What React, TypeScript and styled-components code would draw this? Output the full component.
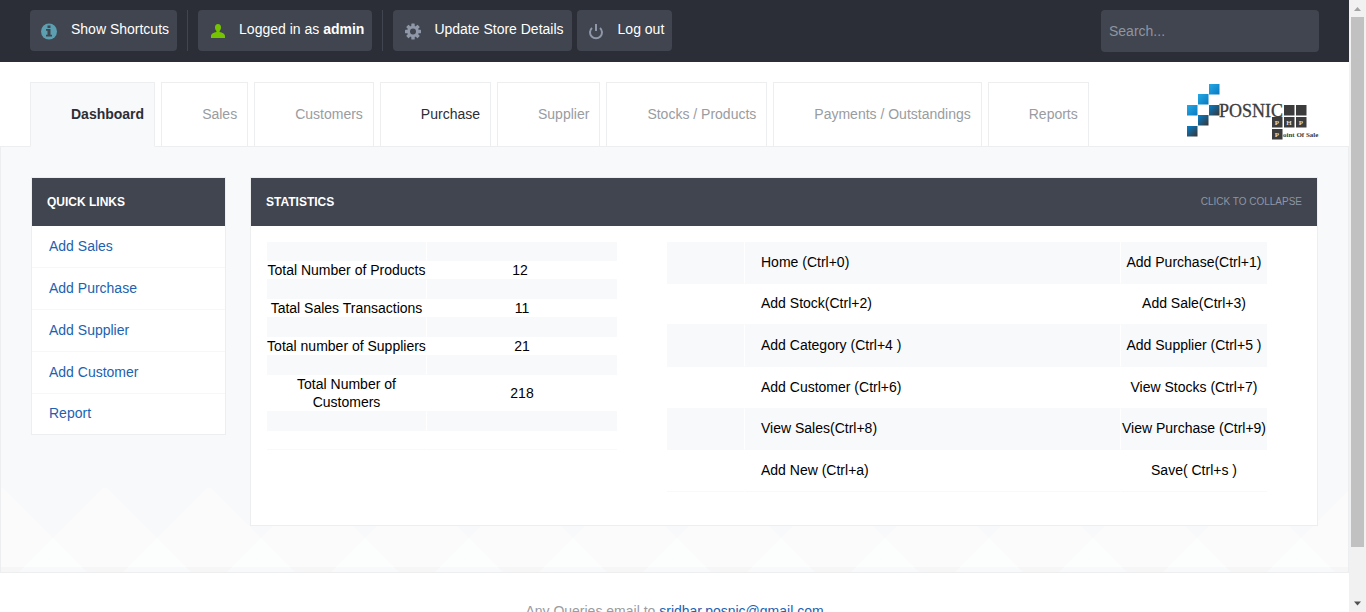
import React from 'react';
import styled, { createGlobalStyle } from 'styled-components';

const c = {
  bar: '#2b2e37',
  panel: '#40454f',
  page: '#f8f9fb',
  line: '#eceef0',
  muted: '#999ca1',
  link: '#1c62b0',
};

const GlobalStyle = createGlobalStyle`
  *, *::before, *::after { box-sizing: border-box; }
  body {
    margin: 0;
    background: #fff;
    color: #000;
    font: 14px/18px "Liberation Sans", Arial, sans-serif;
  }
  a { color: ${c.link}; text-decoration: none; }
  button, input { font: inherit; }
`;

const Shell = styled.div`
  display: flex;
  height: 100vh;
`;

const Page = styled.div`
  flex: 1;
  min-width: 0;
  overflow: hidden auto;
  scrollbar-width: none;
`;

const TopBar = styled.header`
  display: flex;
  align-items: flex-start;
  gap: 5px;
  padding: 10px 30px;
  background: ${c.bar};
`;

const BarLink = styled.a`
  display: flex;
  align-items: center;
  height: 41px;
  padding: 0 8px 0 9px;
  gap: 12px;
  border-radius: 4px;
  background: ${c.panel};
  color: #fff;
  white-space: nowrap;

  svg { display: block; width: 20px; height: 20px; }
`;

const BarLabel = styled.span`
  padding-bottom: 4px;
`;

const Divider = styled.span`
  width: 1px;
  height: 41px;
  margin: 0 5px;
  background: ${c.panel};
`;

const Search = styled.input`
  width: 218px;
  height: 42px;
  margin-left: auto;
  padding: 0 8px;
  border: 0;
  border-radius: 4px;
  background: ${c.panel};
  color: #fff;
  &::placeholder { color: #8f95a1; opacity: 1; }
`;

const NavBar = styled.div`
  display: flex;
  justify-content: space-between;
  align-items: flex-start;
  padding: 20px 30px 0;
`;

const Tabs = styled.nav`
  position: relative;
  z-index: 1;
  display: flex;
  gap: 6px;
  margin-bottom: -1px;
`;

const Tab = styled.a<{ $active?: boolean; $dark?: boolean }>`
  height: 65px;
  padding: 22px 10px 0 40px;
  border: 1px solid ${c.line};
  border-bottom-color: ${p => (p.$active ? c.page : c.line)};
  background: ${p => (p.$active ? c.page : '#fff')};
  color: ${p => (p.$active || p.$dark ? c.bar : c.muted)};
  font-weight: ${p => (p.$active ? 'bold' : 'normal')};
  white-space: nowrap;
`;

const LogoLink = styled.a`
  svg { display: block; width: 134px; height: 60px; }
`;

const Content = styled.main`
  position: relative;
  display: flex;
  align-items: flex-start;
  gap: 24px;
  padding: 30px 30px 46px;
  border: 1px solid ${c.line};
  background: ${c.page};
`;

const Backdrop = styled.svg`
  position: absolute;
  left: 0;
  bottom: 0;
  width: 100%;
  height: 84px;
`;

const Card = styled.section<{ $grow?: boolean }>`
  position: relative;
  flex: ${p => (p.$grow ? '1' : '0 0 195px')};
  min-width: 0;
  border: 1px solid ${c.line};
  background: #fff;
`;

const CardHead = styled.div`
  display: flex;
  align-items: center;
  justify-content: space-between;
  height: 48px;
  padding: 0 15px;
  background: ${c.panel};
`;

const CardTitle = styled.h3`
  margin: 0;
  color: #fff;
  font-size: 12px;
  text-transform: uppercase;
`;

const Collapse = styled.button`
  padding: 0;
  border: 0;
  background: none;
  color: #8f95a5;
  font-size: 10px;
  text-transform: uppercase;
`;

const LinkList = styled.ul`
  margin: 0;
  padding: 0;
  list-style: none;
`;

const LinkItem = styled.li`
  display: flex;
  align-items: center;
  height: 42px;
  padding: 0 17px 2px;
  border-bottom: 1px solid #f6f7f8;
  &:last-child {
    height: 40px;
    border-bottom: 0;
  }
`;

const CardBody = styled.div`
  display: flex;
  align-items: flex-start;
  gap: 50px;
  padding: 16px 16px 33px;
`;

const Table = styled.table<{ $width: number }>`
  width: ${p => p.$width}px;
  table-layout: fixed;
  border-collapse: separate;
  border-spacing: 0;
  text-align: center;

  td {
    padding: 0;
    border-bottom: 1px solid ${c.page};
  }
  td + td { border-left: 1px solid #fff; }
  tr:nth-child(odd) td { background: ${c.page}; }
`;

const StatCell = styled.td`
  height: 19px;
`;

const KeyTable = styled(Table)`
  height: 250px;

  td { padding-bottom: 1px; }
  td:nth-child(2) {
    padding-left: 16px;
    text-align: left;
  }
`;

const Footer = styled.footer`
  padding: 29px 30px 40px;
  color: ${c.muted};
  text-align: center;
`;

const ScrollTrack = styled.div`
  display: flex;
  flex-direction: column;
  align-items: center;
  width: 17px;
  background: #f1f1f1;
`;

const ScrollArrow = styled.svg`
  display: block;
  width: 17px;
  height: 17px;
`;

const ScrollThumb = styled.div`
  flex: 0 1 530px;
  width: 13px;
  margin-bottom: auto;
  background: #c1c1c1;
`;

const InfoIcon = () => (
  <svg viewBox="0 0 20 20" aria-hidden="true">
    <circle cx="10" cy="10.5" r="8" fill="#5b9fb1" />
    <path d="M8.500 4.500h3v2.500h-3zM7 8h4.500v5.800H13v1.700H7v-1.700h1.500V9.700H7z" fill={c.panel} />
  </svg>
);

const UserIcon = () => (
  <svg viewBox="0 0 20 20" aria-hidden="true">
    <path
      d="M11 3c2 0 3 1.400 3 3.400 0 1.500-.6 2.700-1.400 3.500v1c2.600.6 5.400 1.700 5.400 4V17H4v-2.100c0-2.300 2.800-3.400 5.400-4v-1C8.600 9.100 8 7.900 8 6.400 8 4.400 9 3 11 3z"
      fill="#76c400"
    />
  </svg>
);

const GearIcon = () => (
  <svg viewBox="0 0 20 20" aria-hidden="true">
    <g transform="translate(11 10.500)" fill="#9097a8">
      {[0, 45, 90, 135].map(a => (
        <rect key={a} x="-1.700" y="-8" width="3.400" height="16" rx=".5" transform={`rotate(${a})`} />
      ))}
      <circle r="5.800" />
      <circle r="3" fill={c.panel} />
    </g>
  </svg>
);

const PowerIcon = () => (
  <svg viewBox="0 0 20 20" fill="none" stroke="#9097a8" strokeWidth="2" aria-hidden="true">
    <path d="M6 6.900a6 6 0 1 0 8 0M10 3v7" />
  </svg>
);

const blueSquares = [
  [23, 2, 'url(#lightBlue)'],
  [12, 12, 'url(#lightBlue)'],
  [1, 23, 'url(#lightBlue)'],
  [23, 23, 'url(#darkBlue)'],
  [12, 33, 'url(#darkBlue)'],
  [1, 44, 'url(#darkBlue)'],
] as const;

const graySquares = [[98, 23], [110, 23], [86, 35], [98, 35], [110, 35], [86, 47]];

const Logo = () => (
  <svg viewBox="-1 0 134 60" role="img" aria-label="Posnic PHP Point Of Sale">
    <defs>
      <linearGradient id="lightBlue" x1="0" y1="0" x2="1" y2="1">
        <stop offset="0" stopColor="#25a9e4" />
        <stop offset="1" stopColor="#0879c2" />
      </linearGradient>
      <linearGradient id="darkBlue" x1="0" y1="0" x2="1" y2="1">
        <stop offset=".1" stopColor="#0878bf" />
        <stop offset="1" stopColor="#3a3533" />
      </linearGradient>
    </defs>
    {blueSquares.map(([x, y, fill]) => (
      <rect key={`${x}-${y}`} x={x} y={y} width="10.500" height="10.500" fill={fill} />
    ))}
    <g fontFamily="'Liberation Serif', serif" fill="#3c3c3c">
      <text x="33" y="35" fontSize="18" stroke="#3c3c3c" strokeWidth=".3">POSNIC</text>
      {graySquares.map(([x, y]) => (
        <rect key={`${x}-${y}`} x={x} y={y} width="10.500" height="10.500" />
      ))}
      <g fontSize="7" fontWeight="bold">
        <text x="97" y="55">oint Of Sale</text>
        <g fill="#ddd" textAnchor="middle">
          <text x="91" y="43">P</text>
          <text x="103" y="43">H</text>
          <text x="115" y="43">P</text>
          <text x="91" y="55">P</text>
        </g>
      </g>
    </g>
  </svg>
);

const tabs = [
  'Dashboard', 'Sales', 'Customers', 'Purchase', 'Supplier',
  'Stocks / Products', 'Payments / Outstandings', 'Reports',
];

const quickLinks = ['Add Sales', 'Add Purchase', 'Add Supplier', 'Add Customer', 'Report'];

const stats = [
  ['Total Number of Products', '12\u00a0'],
  ['Tatal Sales Transactions', '11'],
  ['Total number of Suppliers', '21'],
  ['Total Number of Customers', '218'],
];

const shortcuts = [
  ['Home (Ctrl+0)', 'Add Purchase(Ctrl+1)'],
  ['Add Stock(Ctrl+2)', 'Add Sale(Ctrl+3)'],
  ['Add Category (Ctrl+4 )', 'Add Supplier (Ctrl+5 )'],
  ['Add Customer (Ctrl+6)', 'View Stocks (Ctrl+7)'],
  ['View Sales(Ctrl+8)', 'View Purchase (Ctrl+9)'],
  ['Add New (Ctrl+a)', 'Save( Ctrl+s )'],
];

const BlankRow = () => (
  <tr>
    <StatCell />
    <StatCell />
  </tr>
);

export default function App() {
  return (
    <Shell>
      <GlobalStyle />
      <Page>
        <TopBar>
          <BarLink href="#"><InfoIcon /><BarLabel>Show Shortcuts</BarLabel></BarLink>
          <Divider />
          <BarLink href="#"><UserIcon /><BarLabel>Logged in as <b>admin</b></BarLabel></BarLink>
          <Divider />
          <BarLink href="#"><GearIcon /><BarLabel>Update Store Details</BarLabel></BarLink>
          <BarLink href="#"><PowerIcon /><BarLabel>Log out</BarLabel></BarLink>
          <Search type="text" placeholder="Search..." aria-label="Search" />
        </TopBar>

        <NavBar>
          <Tabs>
            {tabs.map(t => (
              <Tab key={t} href="#" $active={t === 'Dashboard'} $dark={t === 'Purchase'}>{t}</Tab>
            ))}
          </Tabs>
          <LogoLink href="#"><Logo /></LogoLink>
        </NavBar>

        <Content>
          <Backdrop aria-hidden="true">
            <defs>
              <pattern id="peaks" width="104" height="84" patternUnits="userSpaceOnUse">
                <path d="M0 0h2l50 50 50-50h2v84H0z" fill="#fbfbfb" />
                <path d="M52 50l34 34H18z" fill="#fcfefd" />
                <path d="M0 79h104v5H0z" fill="#f6f6f7" />
                <path d="M23 79h58l5 5H18z" fill="#f8f9fb" />
              </pattern>
            </defs>
            <rect width="100%" height="84" fill="url(#peaks)" />
          </Backdrop>

          <Card>
            <CardHead><CardTitle>Quick Links</CardTitle></CardHead>
            <LinkList>
              {quickLinks.map(l => (
                <LinkItem key={l}><a href="#">{l}</a></LinkItem>
              ))}
            </LinkList>
          </Card>

          <Card $grow>
            <CardHead>
              <CardTitle>Statistics</CardTitle>
              <Collapse type="button">Click to collapse</Collapse>
            </CardHead>
            <CardBody>
              <Table $width={350}>
                <colgroup><col width="159" /><col /></colgroup>
                <tbody>
                  {stats.map(([label, value]) => (
                    <React.Fragment key={label}>
                      <BlankRow />
                      <tr>
                        <StatCell>{label}</StatCell>
                        <StatCell>{value}</StatCell>
                      </tr>
                    </React.Fragment>
                  ))}
                  <BlankRow />
                  <BlankRow />
                </tbody>
              </Table>
              <KeyTable $width={600}>
                <colgroup><col width="77" /><col /><col width="147" /></colgroup>
                <tbody>
                  {shortcuts.map(([left, right]) => (
                    <tr key={left}>
                      <td />
                      <td>{left}</td>
                      <td>{right}</td>
                    </tr>
                  ))}
                </tbody>
              </KeyTable>
            </CardBody>
          </Card>
        </Content>

        <Footer>
          Any Queries email to <a href="mailto:sridhar.posnic@gmail.com">sridhar.posnic@gmail.com</a>
        </Footer>
      </Page>

      <ScrollTrack aria-hidden="true">
        <ScrollArrow viewBox="0 0 17 17"><path d="M5 11l3.500-4L12 11z" fill="#a3a3a3" /></ScrollArrow>
        <ScrollThumb />
        <ScrollArrow viewBox="0 0 17 17"><path d="M5 6.500h7l-3.500 4z" fill="#505050" /></ScrollArrow>
      </ScrollTrack>
    </Shell>
  );
}
